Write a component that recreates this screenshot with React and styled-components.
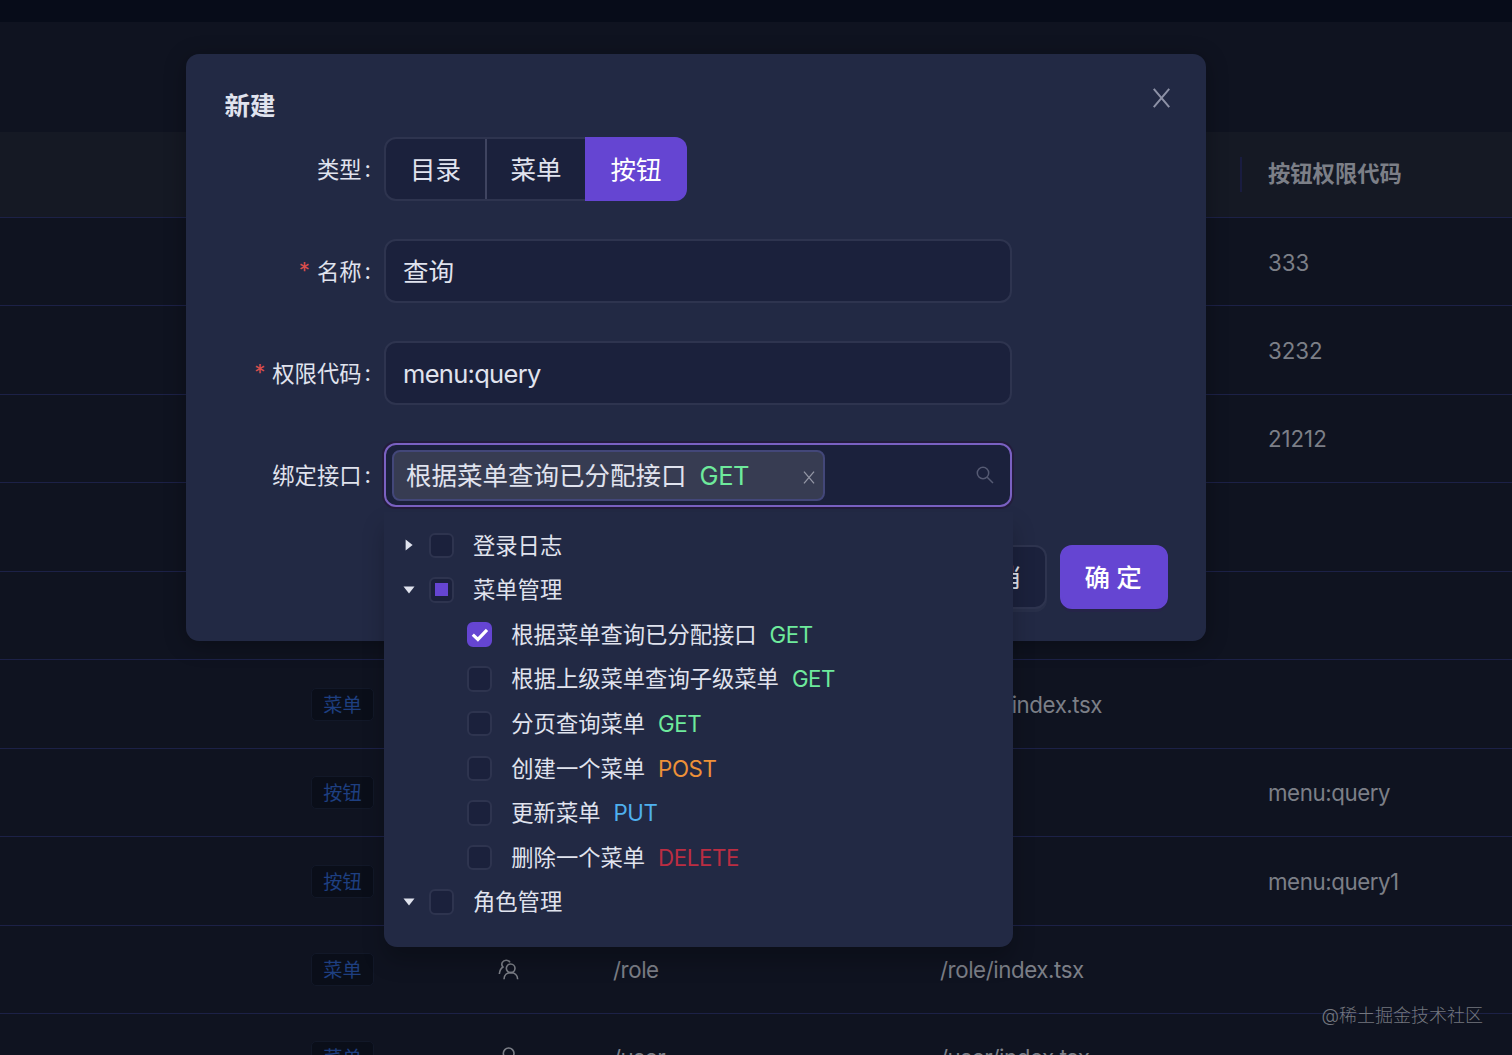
import styled, { createGlobalStyle, css } from 'styled-components';

const GlobalStyle = createGlobalStyle`
    * {
        box-sizing: border-box;
    }

    body {
        margin: 0;
        overflow: hidden;
        background: #0f1320;
        font-family: Inter, "Noto Sans CJK SC", sans-serif;
        font-size: 22.3px;
        color: #e0e3ee;
    }
`

const methodColours = {
    GET: "#6eea9c",
    POST: "#ee9138",
    PUT: "#4fb0ee",
    DELETE: "#bb2d42"
}

const menuRows = [
    { permission: "333" },
    { permission: "3232" },
    { permission: "21212" },
    {},
    {},
    { type: "菜单", component: "/menu/index.tsx" },
    { type: "按钮", permission: "menu:query" },
    { type: "按钮", permission: "menu:query1" },
    { type: "菜单", icon: "role", path: "/role", component: "/role/index.tsx" },
    { type: "菜单", icon: "user", path: "/user", component: "/user/index.tsx" }
]

const apiTree = [
    { title: "登录日志", expanded: false },
    {
        title: "菜单管理",
        expanded: true,
        indeterminate: true,
        children: [
            { title: "根据菜单查询已分配接口", method: "GET", checked: true },
            { title: "根据上级菜单查询子级菜单", method: "GET" },
            { title: "分页查询菜单", method: "GET" },
            { title: "创建一个菜单", method: "POST" },
            { title: "更新菜单", method: "PUT" },
            { title: "删除一个菜单", method: "DELETE" }
        ]
    },
    { title: "角色管理", expanded: true }
]

const RoleIcon = () => (
    <RowIcon viewBox="0 0 60 60">
        <circle cx="35" cy="25" r="13" />
        <path d="M15 58C15 45 24 38 35 38S56 45 56 58" />
        <path d="M33 7C29 -1 15 -2 10 7C7 13 9 18 12 21C6 25 2 32 1 42" />
    </RowIcon>
)

const UserIcon = () => (
    <RowIcon viewBox="0 0 60 60">
        <circle cx="29" cy="16" r="16" />
        <path d="M5 60C5 43 15 32 29 32S53 43 53 60" />
    </RowIcon>
)

const CloseIcon = () => (
    <svg width="100%" height="100%" viewBox="0 0 20 22" fill="none" stroke="currentColor" strokeWidth="2.2">
        <path d="M1.5 1L18.5 21M18.5 1L1.5 21" />
    </svg>
)

const SearchIcon = () => (
    <svg width="18" height="18" viewBox="0 0 18 18" fill="none" stroke="currentColor" strokeWidth="1.5">
        <circle cx="7" cy="7" r="5.7" />
        <path d="M11.2 11.2L17 17" />
    </svg>
)

const Method = ({ name }) => <MethodName $name={name}>{name}</MethodName>

const TreeNode = ({ node, depth = 0 }) => (
    <>
        <TreeRow $depth={depth}>
            <Switcher>
                {node.expanded !== undefined && <Caret $open={node.expanded} viewBox="0 0 12 12">
                    <path d="M0.5 2.6H11.5L6 9.6Z" />
                </Caret>}
            </Switcher>
            <Checkbox $checked={node.checked}>
                {node.indeterminate && <PartMark />}
                {node.checked && <svg width="18" height="14" viewBox="0 0 18 14" fill="none" stroke="#fff" strokeWidth="3.2">
                    <path d="M1.8 6.6L6.9 11.4L16 1.8" />
                </svg>}
            </Checkbox>
            <TreeTitle>
                {node.title}
                {node.method && <Method name={node.method} />}
            </TreeTitle>
        </TreeRow>
        {node.children?.map(child => <TreeNode key={child.title} node={child} depth={depth + 1} />)}
    </>
)

const MenuTable = () => (
    <Table>
        <HeaderRow>
            <HeaderCell />
            <HeaderCell />
            <HeaderCell />
            <HeaderCell />
            <HeaderCell />
            <HeaderCell>按钮权限代码</HeaderCell>
        </HeaderRow>
        {menuRows.map((row, index) => (
            <Row key={index}>
                <Cell />
                <Cell $center>{row.type && <TypeTag>{row.type}</TypeTag>}</Cell>
                <Cell $center>
                    {row.icon === "role" && <RoleIcon />}
                    {row.icon === "user" && <UserIcon />}
                </Cell>
                <Cell $tight>{row.path}</Cell>
                <Cell $tight>{row.component}</Cell>
                <Cell $tight={row.permission?.startsWith("menu")}>{row.permission}</Cell>
            </Row>
        ))}
    </Table>
)

const Field = ({ label, required, children }) => (
    <FormItem>
        <Label>
            {required && <Required>*</Required>}
            {label}
            <Colon>:</Colon>
        </Label>
        {children}
    </FormItem>
)

const CreateModal = () => (
    <Modal>
        <ModalHeader>
            <ModalTitle>新建</ModalTitle>
            <CloseButton><CloseIcon /></CloseButton>
        </ModalHeader>
        <Field label="类型">
            <RadioGroup>
                <RadioButton>目录</RadioButton>
                <RadioButton>菜单</RadioButton>
                <RadioButton $active>按钮</RadioButton>
            </RadioGroup>
        </Field>
        <Field label="名称" required>
            <Input $cjk>查询</Input>
        </Field>
        <Field label="权限代码" required>
            <Input>menu:query</Input>
        </Field>
        <Field label="绑定接口">
            <Select>
                <SelectedTag>
                    <TagText>根据菜单查询已分配接口<Method name="GET" /></TagText>
                    <RemoveTag><CloseIcon /></RemoveTag>
                </SelectedTag>
                <SelectSuffix><SearchIcon /></SelectSuffix>
                <Dropdown>
                    {apiTree.map(node => <TreeNode key={node.title} node={node} />)}
                </Dropdown>
            </Select>
        </Field>
        <Footer>
            <Button>取 消</Button>
            <Button $primary>确 定</Button>
        </Footer>
    </Modal>
)

const App = () => (
    <Page>
        <GlobalStyle />
        <TopBar />
        <Toolbar />
        <MenuTable />
        <Overlay>
            <CreateModal />
        </Overlay>
        <Watermark>@稀土掘金技术社区</Watermark>
    </Page>
)

export default App;


const Page = styled.div`
    position: relative;
    width: 1512px;
    height: 1055px;
    overflow: hidden;
`

const TopBar = styled.div`
    height: 22px;
    background: #070c19;
`

const Toolbar = styled.div`
    height: 110px;
`

const Table = styled.div`
    color: #7c7f87;
`

const Row = styled.div`
    display: grid;
    grid-template-columns: 255px 175px 157px 327px 328px 1fr;
    align-items: center;
    height: 88.45px;
    padding-top: 0.6px;
    border-bottom: 1.6px solid #1c2147;
`

const HeaderRow = styled(Row)`
    height: 86px;
    padding-top: 0;
    background: #151924;
    font-weight: 700;
`

const Cell = styled.div`
    display: flex;
    align-items: center;
    justify-content: ${props => props.$center ? "center" : "flex-start"};
    padding: 0 26px;
    letter-spacing: ${props => props.$tight ? "-0.43px" : "-0.05px"};
    white-space: nowrap;
`

const HeaderCell = styled(Cell)`
    height: 35px;
    padding-bottom: 5px;
    letter-spacing: 0;

    &:not(:last-child) {
        border-right: 2px solid #191c40;
    }
`

const TypeTag = styled.span`
    height: 33px;
    padding: 0 11px;
    border: 1.5px solid #121828;
    border-radius: 5px;
    background: #0a0e19;
    color: #1e3f80;
    font-size: 19.2px;
    line-height: 33px;
`

const RowIcon = styled.svg`
    width: 20px;
    height: 20px;
    overflow: visible;
    fill: none;
    stroke: #7c7f87;
    stroke-width: 4.8;
`

const Overlay = styled.div`
    position: absolute;
    inset: 0;
    padding: 54px 0 0 186px;
`

const Modal = styled.div`
    width: 1020px;
    height: 587px;
    padding: 0 38px;
    border-radius: 13px;
    background: #222944;
    box-shadow: 0 4px 22px rgba(0, 0, 0, 0.3);
`

const ModalHeader = styled.div`
    display: flex;
    justify-content: space-between;
    height: 83px;
`

const ModalTitle = styled.div`
    padding: 33px 0 0 0.5px;
    font-size: 25.5px;
    font-weight: 700;
    line-height: 38px;
`

const CloseButton = styled.div`
    width: 19px;
    height: 20px;
    margin-top: 34px;
    margin-right: -3px;
    color: #8d91a6;
    line-height: 0;
`

const FormItem = styled.div`
    display: grid;
    grid-template-columns: 147.5px 628px;
    column-gap: 12.5px;
    align-items: center;
    height: 64px;
    margin-bottom: 38px;
`

const Label = styled.div`
    display: flex;
    align-items: center;
    justify-content: flex-end;
    padding-bottom: 3px;
    white-space: nowrap;
`

const Required = styled.span`
    margin-right: 7px;
    padding-top: 2px;
    color: #d84e4c;
`

const Colon = styled.span`
    width: 7px;
    margin-left: 3px;
    padding-top: 1px;
`

const control = css`
    height: 64px;
    border: 2px solid #2e344f;
    border-radius: 12px;
    background: #1b213c;
    font-size: 25.5px;
`

const RadioGroup = styled.div`
    ${control}
    display: flex;
    width: 303px;
`

const RadioButton = styled.div`
    display: flex;
    flex: none;
    align-items: center;
    justify-content: center;
    width: 99px;
    padding-bottom: 4px;

    & + & {
        width: 100px;
        border-left: 2px solid #3f4460;
    }

    ${props => props.$active && css`
        && {
            width: 102px;
            margin: -2px 0;
            border: 0;
            border-radius: 0 12px 12px 0;
            background: #6545d2;
            color: #fff;
        }
    `}
`

const Input = styled.div`
    ${control}
    display: flex;
    align-items: center;
    padding: 0 17px ${props => props.$cjk ? 4 : 0}px;
    letter-spacing: ${props => props.$cjk ? 0 : "-0.7px"};
`

const Select = styled.div`
    ${control}
    position: relative;
    display: flex;
    align-items: center;
    justify-content: space-between;
    padding: 0 16px 0 6px;
    border-color: #7a61c2;
    box-shadow: 0 0 0 2px #241d3d;
`

const SelectedTag = styled.div`
    display: flex;
    align-items: center;
    justify-content: space-between;
    width: 433px;
    height: 51px;
    padding: 0 8px 0 12px;
    border: 2px solid #434779;
    border-radius: 8px;
    background: #373c52;
    white-space: nowrap;
`

const TagText = styled.span`
    padding-bottom: 4px;
`

const RemoveTag = styled.div`
    display: flex;
    width: 12px;
    height: 13px;
    margin-top: 4px;
    color: #9497a6;
`

const SelectSuffix = styled.div`
    display: flex;
    color: #555a73;
`

const Dropdown = styled.div`
    position: absolute;
    top: 67px;
    left: -2px;
    width: 629px;
    height: 434.5px;
    padding-top: 11px;
    border-radius: 0 0 13px 13px;
    background: #222944;
    font-size: 22.3px;
    box-shadow: 0 14px 22px rgba(0, 0, 0, 0.22);
`

const TreeRow = styled.div`
    display: flex;
    align-items: center;
    height: 44.62px;
    padding-left: ${props => 6 + props.$depth * 38.3}px;
`

const Switcher = styled.div`
    display: flex;
    justify-content: center;
    width: 38.5px;
`

const Caret = styled.svg`
    width: 12px;
    height: 12px;
    fill: #e0e3ee;
    transform: ${props => props.$open ? "none" : "rotate(-90deg)"};
`

const Checkbox = styled.div`
    display: flex;
    align-items: center;
    justify-content: center;
    width: 25.5px;
    height: 25.5px;
    border: 2px solid ${props => props.$checked ? "#6545d2" : "#2e344f"};
    border-radius: 6px;
    background: ${props => props.$checked ? "#6545d2" : "#1b213c"};
`

const PartMark = styled.div`
    width: 13px;
    height: 13px;
    background: #6545d2;
`

const TreeTitle = styled.div`
    margin-left: 19px;
    padding-bottom: 3.5px;
    white-space: nowrap;
`

const MethodName = styled.span`
    margin-left: 13px;
    color: ${props => methodColours[props.$name]};
    letter-spacing: -0.4px;
`

const Footer = styled.div`
    display: flex;
    justify-content: flex-end;
    gap: 13px;
`

const Button = styled.div`
    ${control}
    display: flex;
    align-items: center;
    justify-content: center;
    width: 108px;
    padding: 0 2px 4px 0;
    letter-spacing: -0.2px;
    box-shadow: 0 3px 0 rgba(255, 255, 255, 0.03);

    ${props => props.$primary && css`
        border-color: #6545d2;
        background: #6545d2;
        color: #fff;
        font-weight: 500;
        box-shadow: 0 3px 0 rgba(50, 20, 90, 0.2);
    `}
`

const Watermark = styled.div`
    position: absolute;
    right: 29px;
    bottom: 26px;
    color: #74777f;
    font-size: 18px;
    font-weight: 300;
    line-height: 26px;
`
